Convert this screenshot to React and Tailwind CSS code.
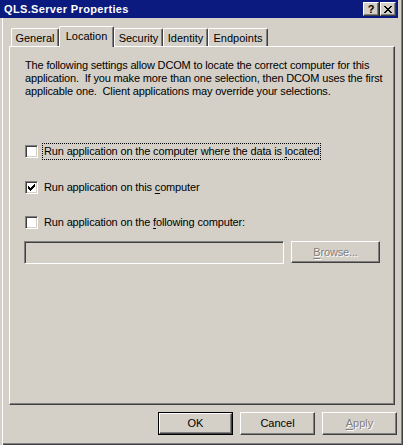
import React from "react";

const FONT = { fontFamily: '"Liberation Sans", Arial, sans-serif' };

function Check() {
  return (
    <svg width="7" height="7" viewBox="0 0 7 7" shapeRendering="crispEdges">
      <path
        fill="#000"
        d="M6 0h1v1h-1z M5 1h2v1h-2z M0 2h1v1h-1z M4 2h3v1h-3z M0 3h2v1h-2z M3 3h3v1h-3z M0 4h5v1h-5z M1 5h3v1h-3z M2 6h1v1h-1z"
      />
    </svg>
  );
}

function Checkbox({ checked }) {
  return (
    <span className="w-[13px] h-[13px] box-border bg-white border border-t-[#808080] border-l-[#808080] border-b-white border-r-white shadow-[inset_1px_1px_#404040,inset_-1px_-1px_#d4d0c8] flex items-center justify-center shrink-0">
      {checked ? <Check /> : null}
    </span>
  );
}

function Raised({ className = "", children }) {
  return (
    <div
      className={
        "box-border border border-t-white border-l-white border-r-[#404040] border-b-[#404040] shadow-[inset_-1px_-1px_#808080] bg-[#d4d0c8] flex items-center justify-center " +
        className
      }
    >
      {children}
    </div>
  );
}

function Tab({ label, w, selected }) {
  if (selected) {
    return (
      <div
        className={`${w} h-[21px] -mb-[1px] relative z-10 bg-[#d4d0c8] border-l border-t border-l-white border-t-white border-r border-r-[#404040] shadow-[inset_-1px_0_#808080] rounded-tl-[2px] rounded-tr-[2px] flex justify-center pt-[3px] text-[11px] leading-[13px] text-black`}
      >
        {label}
      </div>
    );
  }
  return (
    <div
      className={`${w} h-[18px] bg-[#d4d0c8] border-l border-t border-l-white border-t-white border-r border-r-[#404040] shadow-[inset_-1px_0_#808080] rounded-tl-[2px] rounded-tr-[2px] flex justify-center pt-[3px] text-[11px] leading-[13px] text-black`}
    >
      {label}
    </div>
  );
}

function U({ children }) {
  return <span className="underline underline-offset-[2px]">{children}</span>;
}

export default function App() {
  return (
    <div
      style={FONT}
      className="w-[403px] h-[445px] bg-[#d4d0c8] flex flex-col box-border shadow-[inset_2px_0_#d4d0c8,inset_3px_0_#ffffff,inset_-1px_-1px_#404040,inset_-2px_-2px_#808080] overflow-hidden"
    >
      {/* Title bar */}
      <div className="h-[18px] mr-[5px] bg-[#0a1a7e] flex items-center justify-between pl-[4px] pr-[2px]">
        <span className="text-white font-bold text-[11px] leading-[13px] tracking-[0.35px]">QLS.Server Properties</span>
        <div className="flex gap-[1px]">
          <Raised className="w-[16px] h-[14px]">
            <span className="text-black font-bold text-[11px] leading-[11px]">?</span>
          </Raised>
          <Raised className="w-[16px] h-[14px]">
            <svg width="8" height="7" viewBox="0 0 8 7" shapeRendering="crispEdges">
              <path
                fill="#000"
                d="M0 0h2v1h-2z M6 0h2v1h-2z M1 1h2v1h-2z M5 1h2v1h-2z M2 2h4v1h-4z M3 3h2v1h-2z M2 4h4v1h-4z M1 5h2v1h-2z M5 5h2v1h-2z M0 6h2v1h-2z M6 6h2v1h-2z"
              />
            </svg>
          </Raised>
        </div>
      </div>

      {/* Tabs */}
      <div className="mt-[8px] pl-[11px] flex items-end h-[20px]">
        <Tab label="General" w="w-[48px]" />
        <Tab label="Location" w="w-[55px]" selected />
        <Tab label="Security" w="w-[49px]" />
        <Tab label="Identity" w="w-[45px]" />
        <Tab label="Endpoints" w="w-[60px]" />
      </div>

      {/* Panel */}
      <div className="ml-[9px] w-[386px] h-[359px] box-border border border-t-white border-l-white border-r-[#404040] border-b-[#404040] shadow-[inset_-1px_-1px_#808080] flex flex-col pl-[15px] pt-[12px] text-[11px] leading-[13px] text-black tracking-[-0.15px]">
        <p className="whitespace-nowrap">
          The following settings allow DCOM to locate the correct computer for this
          <br />
          application.&nbsp; If you make more than one selection, then DCOM uses the first
          <br />
          applicable one.&nbsp; Client applications may override your selections.
        </p>

        <div className="mt-[45px] h-[17px] flex items-center">
          <Checkbox />
          <span className="ml-[4px] h-[17px] pl-[1px] pr-[1px] pt-[1px] box-border border border-dotted border-black whitespace-nowrap">
            Run application on the computer where the data is <U>l</U>ocated
          </span>
        </div>

        <div className="mt-[19px] h-[17px] flex items-center">
          <Checkbox checked />
          <span className="ml-[6px] whitespace-nowrap">
            Run application on this <U>c</U>omputer
          </span>
        </div>

        <div className="mt-[18px] h-[17px] flex items-center">
          <Checkbox />
          <span className="ml-[6px] whitespace-nowrap">
            Run application on the <U>f</U>ollowing computer:
          </span>
        </div>

        <div className="mt-[10px] flex items-start">
          <div className="-ml-[1px] w-[260px] h-[23px] box-border border border-t-[#808080] border-l-[#808080] border-b-white border-r-white shadow-[inset_1px_1px_#404040,inset_-1px_-1px_#d4d0c8] bg-[#d4d0c8]" />
          <Raised className="ml-[7px] w-[89px] h-[22px]">
            <span className="text-[#808080] [text-shadow:1px_1px_0_#ffffff]">
              <U>B</U>rowse...
            </span>
          </Raised>
        </div>
      </div>

      {/* Bottom buttons */}
      <div className="mt-[7px] flex pl-[158px] gap-[7px] text-[11px] leading-[13px]">
        <div className="w-[75px] h-[23px] box-border border border-black">
          <Raised className="w-full h-full">OK</Raised>
        </div>
        <Raised className="w-[75px] h-[23px]">Cancel</Raised>
        <Raised className="w-[75px] h-[23px]">
          <span className="text-[#808080] [text-shadow:1px_1px_0_#ffffff]">
            <U>A</U>pply
          </span>
        </Raised>
      </div>
    </div>
  );
}
